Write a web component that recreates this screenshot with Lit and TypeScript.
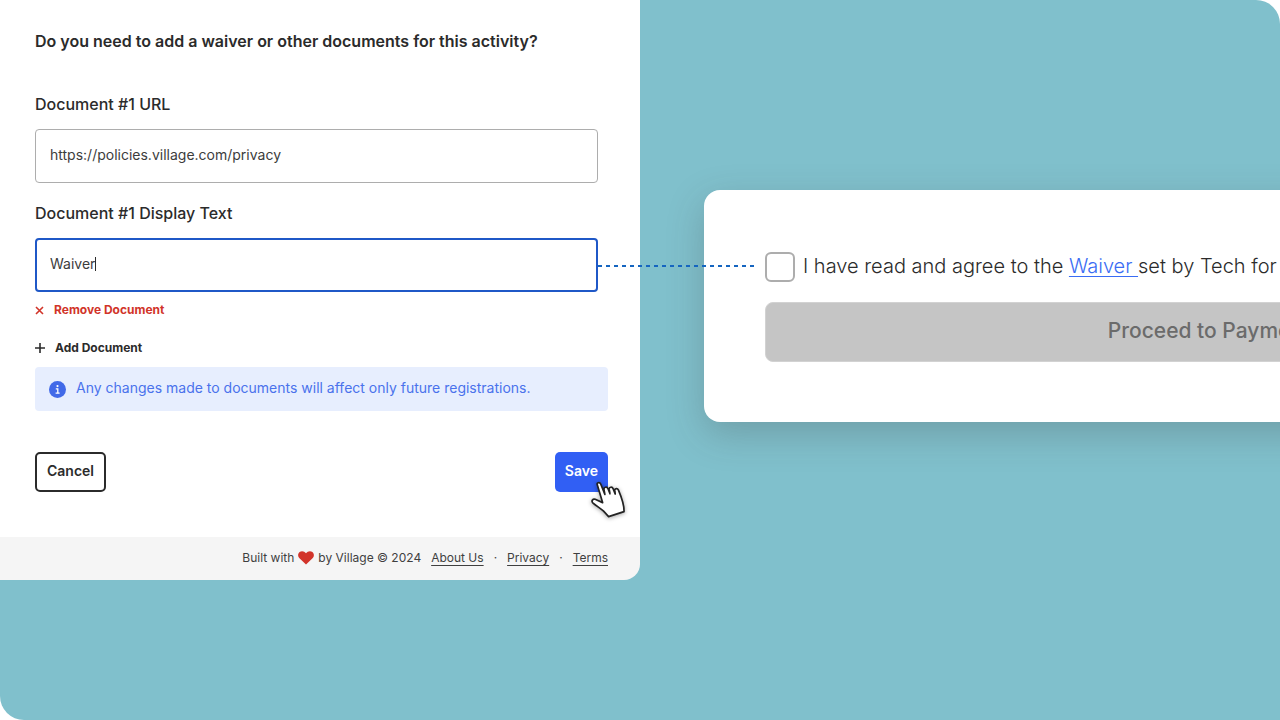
import { LitElement, html, css } from "lit";
import { customElement, state } from "lit/decorators.js";

@customElement("app-root")
export class AppRoot extends LitElement {
  @state() private url = "https://policies.village.com/privacy";
  @state() private displayText = "Waiver";

  static styles = css`
    :host {
      display: block;
      font-family: Inter, "Liberation Sans", sans-serif;
      color: #2b2b2b;
      background: #fff;
    }
    * {
      box-sizing: border-box;
    }
    a {
      color: inherit;
    }
    svg {
      flex: none;
    }
    button {
      font: inherit;
      cursor: pointer;
    }
    .stage {
      display: grid;
      grid-template-columns: minmax(0, 1fr) minmax(0, 1fr);
      align-items: start;
      min-height: 100vh;
      overflow: hidden;
      background: #80c0cc;
      border-radius: 0 24px 0 24px;
    }
    .editor {
      position: relative;
      z-index: 2;
    }
    .form {
      display: flex;
      flex-direction: column;
      align-items: stretch;
      background: #fff;
      padding: 31px 32px 45px 35px;
    }
    .title {
      margin: 0 0 43px;
      font-size: 16px;
      line-height: 20px;
      font-weight: 600;
    }
    .field {
      display: flex;
      flex-direction: column;
      gap: 15px;
      margin: 0 10px 20px 0;
    }
    .field.last {
      margin-bottom: 8px;
    }
    .label {
      font-size: 16px;
      line-height: 20px;
      font-weight: 500;
    }
    .control {
      position: relative;
      display: flex;
    }
    .input {
      flex: 1;
      min-width: 0;
      height: 54px;
      padding: 0 14px 4px;
      border: 1px solid #adadad;
      border-radius: 4px;
      outline: none;
      background: #fff;
      color: #3c3c3c;
      font: inherit;
      font-size: 14px;
    }
    .input.active {
      border: 2px solid #1f58c7;
      padding: 0 13px 4px;
    }
    .caret {
      position: absolute;
      left: 60px;
      top: 19px;
      width: 1px;
      height: 14px;
      background: #2b2b2b;
    }
    .connector {
      position: absolute;
      left: 100%;
      top: 50%;
      width: 158px;
      height: 2px;
      background: repeating-linear-gradient(90deg, #1565c0 0 4px, transparent 4px 8px);
    }
    .text-button {
      display: flex;
      align-items: center;
      align-self: flex-start;
      gap: 10px;
      padding: 0;
      border: 0;
      background: none;
      color: #2b2b2b;
      font-size: 12px;
      line-height: 20px;
      font-weight: 700;
    }
    .text-button.danger {
      color: #d13429;
      margin-bottom: 18px;
    }
    .notice {
      display: flex;
      align-items: center;
      gap: 10px;
      min-height: 44px;
      margin: 9px 0 41px;
      padding: 0 14px;
      border-radius: 4px;
      background: #e7eefe;
      color: #4a72ec;
      font-size: 14px;
      line-height: 20px;
    }
    .notice p {
      margin: 0;
      padding-bottom: 2px;
    }
    .actions {
      display: flex;
      justify-content: space-between;
    }
    .action {
      height: 40px;
      padding: 0 10px 3px;
      border: 2px solid #2b2b2b;
      border-radius: 5px;
      background: #fff;
      color: #2b2b2b;
      font-size: 14px;
      font-weight: 600;
    }
    .action.primary {
      border: 0;
      background: #315ff4;
      color: #fff;
    }
    .save {
      position: relative;
      display: flex;
    }
    .pointer {
      position: absolute;
      left: 35px;
      top: 29px;
      overflow: visible;
      filter: drop-shadow(0 1px 2px rgba(0, 0, 0, 0.35));
      pointer-events: none;
    }
    .footer {
      display: flex;
      align-items: center;
      justify-content: flex-end;
      gap: 10px;
      min-height: 43px;
      padding: 0 32px 2px;
      border-radius: 0 0 16px 0;
      background: #f5f5f5;
      color: #3f3f3f;
      font-size: 12px;
      line-height: 16px;
    }
    .built {
      display: flex;
      align-items: center;
      gap: 4px;
    }
    .footer a {
      text-decoration-thickness: 1px;
      text-underline-offset: 3px;
      text-decoration-skip-ink: none;
    }
    .preview {
      padding: 190px 0 0 64px;
    }
    .card {
      width: 1010px;
      padding: 62px 61px 60px;
      border-radius: 16px;
      background: #fff;
      box-shadow: 0 12px 36px rgba(60, 60, 60, 0.25);
    }
    .agree {
      display: flex;
      align-items: center;
      gap: 8px;
      margin-bottom: 20px;
      font-size: 20px;
      font-weight: 300;
      line-height: 28px;
      white-space: nowrap;
    }
    .agree label {
      padding-bottom: 2px;
    }
    .check {
      appearance: none;
      flex: none;
      width: 30px;
      height: 30px;
      margin: 0;
      border: 2px solid #adadad;
      border-radius: 6px;
      background: #fff;
    }
    .agree a {
      color: #3a6cf4;
      white-space: pre;
      text-decoration-thickness: 1px;
      text-underline-offset: 3px;
    }
    .proceed {
      display: block;
      width: 100%;
      height: 60px;
      padding: 0 0 4px;
      border: 1px solid #d2d2d2;
      border-radius: 8px;
      background: #c5c5c5;
      color: #6b6b6b;
      font-size: 21px;
      font-weight: 500;
    }
  `;

  render() {
    return html`
      <main class="stage">
        <section class="editor">
          <form class="form" @submit=${(e: Event) => e.preventDefault()}>
            <h1 class="title">Do you need to add a waiver or other documents for this activity?</h1>
            <div class="field">
              <label class="label" for="url">Document #1 URL</label>
              <div class="control">
                <input class="input" id="url" type="text" .value=${this.url}
                  @input=${(e: Event) => (this.url = (e.target as HTMLInputElement).value)} />
              </div>
            </div>
            <div class="field last">
              <label class="label" for="text">Document #1 Display Text</label>
              <div class="control">
                <input class="input active" id="text" type="text" .value=${this.displayText}
                  @input=${(e: Event) => (this.displayText = (e.target as HTMLInputElement).value)} />
                <span class="caret"></span>
                <span class="connector"></span>
              </div>
            </div>
            <button class="text-button danger" type="button">
              <svg width="9" height="9" viewBox="0 0 9 9" fill="none" stroke="currentColor" stroke-width="1.6">
                <path d="M1 1l7 7M8 1L1 8" />
              </svg>
              Remove Document
            </button>
            <button class="text-button" type="button">
              <svg width="10" height="10" viewBox="0 0 10 10" fill="none" stroke="currentColor" stroke-width="1.6">
                <path d="M5 0v10M0 5h10" />
              </svg>
              Add Document
            </button>
            <div class="notice">
              <svg width="17" height="17" viewBox="0 0 17 17">
                <circle cx="8.5" cy="8.5" r="8.5" fill="#4169e8" />
                <circle cx="8.5" cy="5.1" r="1.1" fill="#fff" />
                <path d="M6.8 7.8h2v4M6.6 12.1h4" fill="none" stroke="#fff" stroke-width="1.3" />
              </svg>
              <p>Any changes made to documents will affect only future registrations.</p>
            </div>
            <div class="actions">
              <button class="action" type="button">Cancel</button>
              <div class="save">
                <button class="action primary" type="submit">Save</button>
                <svg class="pointer" width="36" height="38" viewBox="0 0 36 38">
                  <path d="M7.2 3.6C6.6 1.6 9.7 0.8 10.7 3L14.9 13.4L14 8.6C13.6 6 17 5.3 18 7.8L20 12.8L19.2 8.4C18.9 5.8 22.2 5.4 23.2 7.9L25.2 13L24.8 9.4C24.7 7.2 27.5 6.9 28.5 9.2C31.8 17 34.4 23 34 30.6L18.6 35.6L13.6 30.2C10.8 27.4 6.6 25.2 2.8 21.8C1 20.1 2.9 17.4 5.2 18.3L12.6 21.6Z"
                    fill="#fff" stroke="#222" stroke-width="1.7" stroke-linejoin="round" />
                </svg>
              </div>
            </div>
          </form>
          <footer class="footer">
            <span class="built">
              <span>Built with</span>
              <svg width="16" height="14" viewBox="0 0 16 14">
                <path d="M8 13.6L1.2 7C-0.4 5.2-0.2 2.4 1.6 1C3.5-0.4 6.4 0 8 2.3C9.6 0 12.5-0.4 14.4 1C16.2 2.4 16.4 5.2 14.8 7Z" fill="#d2342a" />
              </svg>
              <span>by Village © 2024</span>
            </span>
            <a href="#about">About Us</a>
            <span>·</span>
            <a href="#privacy">Privacy</a>
            <span>·</span>
            <a href="#terms">Terms</a>
          </footer>
        </section>
        <section class="preview">
          <div class="card">
            <div class="agree">
              <input class="check" id="agree" type="checkbox" />
              <label for="agree">I have read and agree to the <a href="#waiver">${this.displayText + " "}</a>set by Tech for</label>
            </div>
            <button class="proceed" type="button">Proceed to Payment</button>
          </div>
        </section>
      </main>
    `;
  }
}
